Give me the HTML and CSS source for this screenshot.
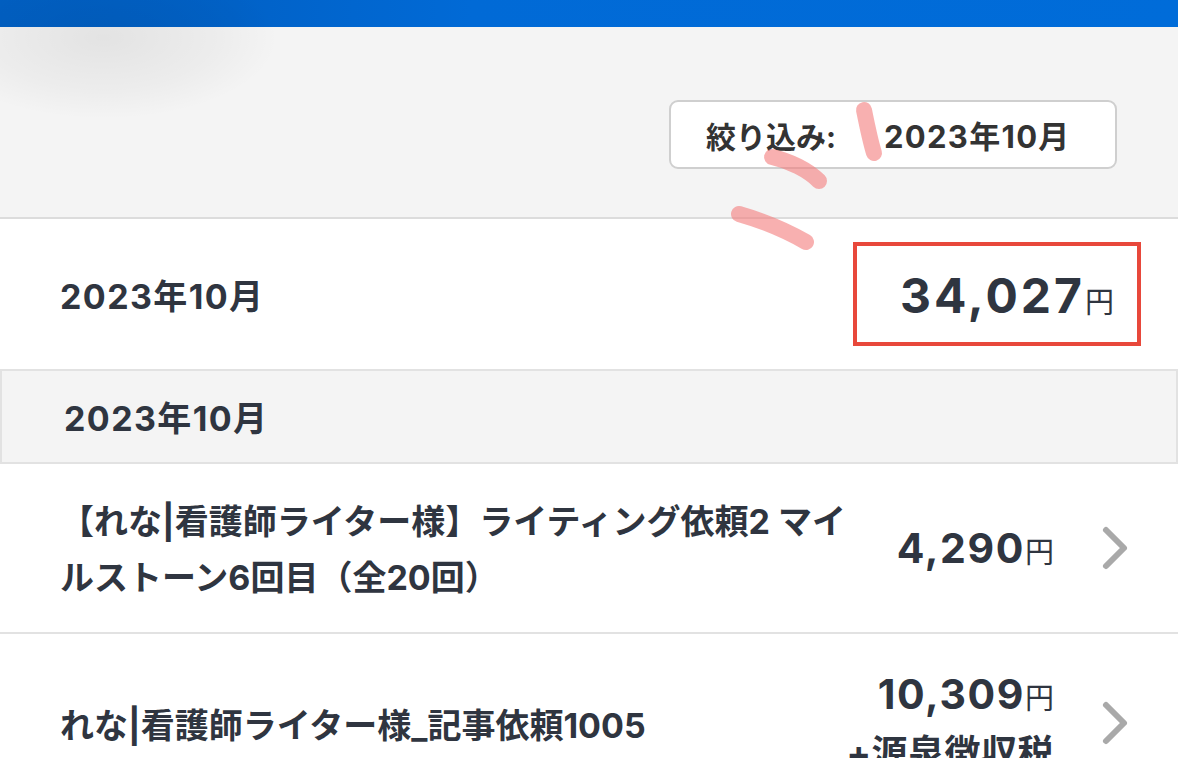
FILE: index.html
```html
<!DOCTYPE html>
<html lang="ja">
<head>
<meta charset="utf-8">
<link rel="stylesheet" href="styles.css">
</head>
<body>
<div class="page">
  <header class="topbar"></header>
  <div class="blur-blob"></div>
  <section class="filter-area">
    <div class="filter-box">
      <span class="filter-label">絞り込み:</span>
      <span class="filter-value">2023年10月</span>
    </div>
  </section>
  <section class="total-row">
    <span class="total-month">2023年10月</span>
    <div class="total-box">
      <span class="num total-num">34,027</span><span class="yen total-yen">円</span>
    </div>
  </section>
  <div class="month-header">2023年10月</div>
  <ul class="list">
    <li class="item">
      <div class="item-title">【れな|看護師ライター様】ライティング依頼2 マイルストーン6回目（全20回）</div>
      <div class="item-amount">
        <div><span class="num">4,290</span><span class="yen">円</span></div>
      </div>
      <svg class="chev" viewBox="0 0 30 46" width="30" height="46"><path d="M6 5 L24 23 L6 41" fill="none" stroke="#a9a9a9" stroke-width="6" stroke-linecap="round" stroke-linejoin="round"/></svg>
    </li>
    <li class="item item2">
      <div class="item-title">れな|看護師ライター様_記事依頼1005</div>
      <div class="item-amount">
        <div><span class="num">10,309</span><span class="yen">円</span></div>
        <div class="tax">+源泉徴収税</div>
      </div>
      <svg class="chev" viewBox="0 0 30 46" width="30" height="46"><path d="M6 5 L24 23 L6 41" fill="none" stroke="#a9a9a9" stroke-width="6" stroke-linecap="round" stroke-linejoin="round"/></svg>
    </li>
  </ul>
  <svg class="marks" width="1178" height="758" viewBox="0 0 1178 758">
    <g fill="none" stroke="#f47c7c" stroke-opacity="0.6" stroke-linecap="round" stroke-width="16">
      <path d="M864 110 C867 125 870 140 874 153"/>
      <path d="M772 157 C790 161 808 170 819 181"/>
      <path d="M739 214 C760 220 785 230 806 242"/>
    </g>
  </svg>
</div>
</body>
</html>
```
FILE: styles.css
```css
* { box-sizing: border-box; margin: 0; padding: 0; }
html, body { width: 1178px; height: 758px; overflow: hidden; }
body {
  background: #fff;
  font-family: Inter, "Noto Sans CJK JP", sans-serif;
  color: #2f3540;
}
.page { position: relative; width: 1178px; height: 758px; overflow: hidden; }
.topbar {
  height: 27px;
  background: linear-gradient(90deg, #0160c4 0%, #0162c8 20%, #016ad6 40%, #006cd9 100%);
}
.blur-blob {
  position: absolute;
  left: -40px; top: -30px;
  width: 320px; height: 150px;
  background: radial-gradient(ellipse at 45% 45%, rgba(0,0,0,0.07) 0%, rgba(0,0,0,0.03) 45%, rgba(0,0,0,0) 70%);
  pointer-events: none;
}
.filter-area {
  height: 192px;
  background: #f4f4f4;
  border-bottom: 2px solid #dcdcdc;
  display: flex;
  justify-content: flex-end;
  align-items: flex-start;
  padding: 73px 61px 0 0;
}
.filter-box {
  width: 448px;
  height: 69px;
  background: #fff;
  border: 2px solid #cfcfcf;
  border-radius: 9px;
  display: flex;
  align-items: center;
  padding-left: 35px;
  font-weight: 700;
  font-size: 30px;
  color: #333;
}
.filter-label { width: 178px; }
.filter-value { font-size: 31px; letter-spacing: 1.3px; }
.total-row {
  height: 150px;
  display: flex;
  align-items: center;
  justify-content: space-between;
  padding: 0 37px 0 60px;
}
.total-month { font-size: 34px; font-weight: 700; letter-spacing: 1.4px; }
.total-box {
  width: 288px;
  height: 104px;
  border: 4px solid #e8483b;
  display: flex;
  align-items: center;
  justify-content: flex-end;
  padding-right: 23px;
  padding-top: 2px;
}
.num { font-weight: 700; font-size: 41px; letter-spacing: 1.6px; }
.yen { font-size: 29px; font-weight: 400; }
.total-num { font-size: 48px; letter-spacing: 3px; }
.total-yen { font-size: 29px; margin-top: 10px; }
.month-header {
  height: 95px;
  background: #f4f4f4;
  border: 2px solid #e2e2e2;
  display: flex;
  align-items: center;
  padding-left: 62px;
  font-size: 34px;
  font-weight: 700;
  letter-spacing: 1.4px;
}
.list { list-style: none; }
.item {
  height: 170px;
  border-bottom: 2px solid #e2e2e2;
  display: flex;
  align-items: center;
  padding: 0 48px 0 60px;
}
.item-title {
  width: 800px;
  font-size: 34px;
  font-weight: 700;
  line-height: 56px;
  padding-top: 4px;
}
.item-amount {
  flex: 1;
  text-align: right;
  padding-right: 46px;
}
.item2 { align-items: flex-start; }
.item2 .item-title { padding-top: 64px; }
.item2 .item-amount { padding-top: 32px; line-height: 56px; }
.tax { font-size: 36px; line-height: 44px; font-weight: 700; white-space: nowrap; letter-spacing: 0.5px; }
.chev { flex: none; }
.item2 .chev { margin-top: 66px; }
.marks { position: absolute; left: 0; top: 0; pointer-events: none; }
```
